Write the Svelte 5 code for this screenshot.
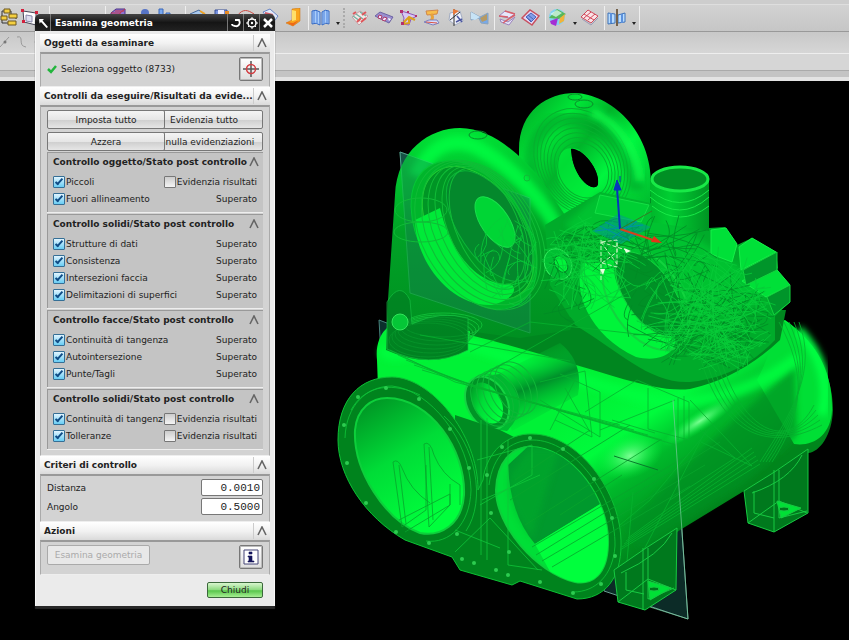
<script lang="ts">
	type Check = { label: string; checked: boolean; mark?: boolean };

	const groups: { title: string; rows: Check[] }[] = [
		{
			title: 'Controllo oggetto/Stato post controllo',
			rows: [
				{ label: 'Piccoli', checked: true, mark: true },
				{ label: 'Fuori allineamento', checked: true }
			]
		},
		{
			title: 'Controllo solidi/Stato post controllo',
			rows: [
				{ label: 'Strutture di dati', checked: true },
				{ label: 'Consistenza', checked: true },
				{ label: 'Intersezioni faccia', checked: true },
				{ label: 'Delimitazioni di superfici', checked: true }
			]
		},
		{
			title: 'Controllo facce/Stato post controllo',
			rows: [
				{ label: 'Continuità di tangenza', checked: true },
				{ label: 'Autointersezione', checked: true },
				{ label: 'Punte/Tagli', checked: true }
			]
		},
		{
			title: 'Controllo solidi/Stato post controllo',
			rows: [
				{ label: 'Continuità di tangenz', checked: true, mark: true },
				{ label: 'Tolleranze', checked: true, mark: true }
			]
		}
	];

	const tools = [
		'tree', 'frame', 'sep', 'blank', 'blank', 'sep', 'cube', 'key', 'bars', 'sep',
		'doc', 'save', 'curve', 'page', 'boot', 'line', 'book', 'caret', 'grip',
		'rows', 'film', 'star', 'spool', 'cross', 'bow', 'line', 'fold', 'sheet',
		'line', 'globe', 'caret', 'grid', 'line', 'split', 'caret', 'line'
	];

	let distance = $state('0.0010');
	let angle = $state('0.5000');

	// seeded so the wireframe is the same on every load
	let seed = 41;
	function rnd() {
		seed = (seed * 16807) % 2147483647;
		return seed / 2147483647;
	}

	function tangle(cx: number, cy: number, rx: number, ry: number, count: number) {
		const place = (spread: number) => {
			const a = rnd() * Math.PI * 2;
			const r = Math.sqrt(rnd()) * spread;
			return [cx + Math.cos(a) * r * rx, cy + Math.sin(a) * r * ry];
		};
		let d = '';
		for (let i = 0; i < count; i++) {
			const [x1, y1] = place(1);
			const [x2, y2] = place(1);
			// bend the middle a little so the edges read as long shallow arcs
			const mx = (x1 + x2) / 2 + (rnd() - 0.5) * 30;
			const my = (y1 + y2) / 2 + (rnd() - 0.5) * 30;
			d += `M${x1.toFixed(1)},${y1.toFixed(1)} Q${mx.toFixed(1)},${my.toFixed(1)} ${x2.toFixed(1)},${y2.toFixed(1)}`;
		}
		return d;
	}

	const darkLines = [
		tangle(700, 320, 76, 56, 70),
		tangle(610, 245, 56, 30, 40),
		tangle(560, 290, 36, 36, 14),
		tangle(670, 255, 50, 42, 26)
	].join('');
	const lightLines = [
		tangle(705, 305, 72, 60, 100),
		tangle(590, 265, 56, 50, 60),
		tangle(510, 260, 34, 46, 30),
		tangle(725, 345, 50, 30, 36)
	].join('');

	const steps = (n: number) => Array.from({ length: n }, (_, i) => i);
	const bolts = [
		[358, 397], [386, 388], [419, 399], [450, 429], [469, 468], [344, 425], [347, 463],
		[366, 503], [396, 532], [429, 543], [457, 534], [502, 447], [487, 475], [530, 438],
		[563, 449], [594, 479], [612, 518], [615, 556], [601, 584], [573, 593], [540, 582],
		[509, 552], [491, 513], [462, 559], [474, 563], [496, 570], [508, 575]
	];
</script>

{#snippet toolIcon(name: string)}
	<svg viewBox="0 0 20 20" width="20" height="20" aria-hidden="true">
		{#if name === 'tree'}
			<path d="M2 3h9v4h5v4M2 3v12h6" fill="none" stroke="#333" />
			<path d="M4 1h6v4H4zM9 6h8v4H9zM1 8h6v4H1zM8 13h8v4H8z" fill="#f4cf3f" stroke="#6d5720" />
		{:else if name === 'frame'}
			<path d="M3 3l13 2v12l-12-3z" fill="#fff" stroke="#445" />
			<path d="M6 7l6 1v6l-6-1z" fill="#dde" stroke="#88a" />
			<path d="M1 1h3v3H1zM15 3h3v3h-3zM2 12h3v3H2zM15 15h3v3h-3z" fill="#d3203c" />
		{:else if name === 'cube'}
			<path d="M3 5l5-4h9v9l-5 4H3z" fill="#8f74d0" stroke="#4a2f86" />
			<path d="M3 5h9v9M12 5l5-4M7 3h9" fill="none" stroke="#c1344b" />
		{:else if name === 'key'}
			<path d="M3 14l7-8 4 4-7 7z" fill="#f2c02d" stroke="#a07010" />
			<circle cx="13" cy="5" r="4" fill="#5674c6" />
		{:else if name === 'bars'}
			<path d="M3 1h4v15H3zM10 5h4v11h-4z" fill="#78a7f0" stroke="#3967b8" />
		{:else if name === 'doc'}
			<path d="M2 6l9-4 6 5-8 8z" fill="#a9c9ee" stroke="#46699b" />
			<path d="M12 3l5 3" stroke="#f0a323" stroke-width="2" />
		{:else if name === 'save'}
			<path d="M3 2h12v13H3z" fill="#7893df" stroke="#344d97" />
			<path d="M6 2h6v5H6z" fill="#eef" /><path d="M13 3h4v6h-4z" fill="#e88a24" />
		{:else if name === 'curve'}
			<path d="M1 8C7 0 12 2 18 6" fill="none" stroke="#cc4840" />
		{:else if name === 'page'}
			<path d="M3 4l7-3 8 7-6 8z" fill="#e2eafa" stroke="#6683c6" />
			<path d="M5 5l8 2" stroke="#ce5b66" stroke-width="2" />
		{:else if name === 'boot'}
			<path d="M8 1l8-1v13l-7 5-7-3 6-3z" fill="#f9a51c" stroke="#c96a08" stroke-width=".5" />
			<path d="M8 2l4 1v9l-4 1z" fill="#ffe06a" /><path d="M2 14l7 1 6-3-6 6z" fill="#ed6818" />
		{:else if name === 'book'}
			<path d="M1 3q4-2 8 1v13q-4-3-8-1zM18 3q-4-2-7 1v13q4-3 7-1z" fill="#a9cdfa" stroke="#3468c2" />
			<path d="M3 3v12M6 3v13M13 3v13M16 3v12" stroke="#5b8de0" stroke-width="2" opacity=".6" />
		{:else if name === 'rows'}
			<path d="M2 9l8-6 8 5-9 9z" fill="#f6e8e8" stroke="#c3a0a6" />
			<path d="M3 8l7 5M6 6l7 5M10 4l6 4" stroke="#74b3a2" stroke-width="1.500" />
			<path d="M3 6l3-2M7 14l4-4M12 7l4-3M11 14l5-4" stroke="#e0555a" stroke-width="2" />
		{:else if name === 'film'}
			<path d="M1 8l5-4 13 5-4 6z" fill="#9a8fd0" stroke="#6d63a4" />
			<path d="M5 7l3 1-1 3-3-1zM10 9l3 1-2 3-3-1z" fill="#f4e5ff" stroke="#af3c68" />
			<path d="M14 10l3 1-2 2z" fill="#fff" />
		{:else if name === 'star'}
			<path d="M3 3l7 2 9 3-6 3-2 6-6-1 1-6z" fill="#d7c7f4" stroke="#8f58b8" />
			<path d="M4 16l7-7 6 3M11 9v6l-6 1" fill="none" stroke="#dba21c" stroke-width="2" />
			<path d="M2 2h3v3H2zM17 7h2v2h-2zM3 14h3v3H3zM9 3h2v2H9z" fill="#b42e70" />
		{:else if name === 'spool'}
			<path d="M4 3l12-1-1 4-10 1z" fill="#f7bd4b" stroke="#d1864a" />
			<path d="M9 6q3 3 0 7" fill="none" stroke="#e7a23b" stroke-width="3" />
			<path d="M2 14l5-2h8l2 3-6 2z" fill="#d8ddfb" stroke="#7c80bd" />
			<path d="M4 14l11 1" stroke="#dc5443" />
		{:else if name === 'cross'}
			<path d="M4 5l10-2 3 10-8 4-6-5z" fill="#eff1fa" stroke="#a3adc2" />
			<path d="M8 1v17M4 12l10-8" stroke="#333" /><path d="M7 1l6 2-6 4z" fill="#e8793a" />
			<path d="M11 8l5 6M10 14l6-3" stroke="#4c569f" stroke-width="1.500" />
		{:else if name === 'bow'}
			<path d="M1 4l9 5 8-4v11l-7-1-2-5-8 2z" fill="#77a9e9" stroke="#8aa3bd" />
			<path d="M1 4l9 5-5 3-4-1z" fill="#c7e3f6" /><path d="M10 10l7-4v6l-5 2z" fill="#b69a64" />
		{:else if name === 'fold'}
			<path d="M2 8l6-5 10 3-6 4zM3 11l8 3 7-5-6 8-8-3z" fill="#e6e6fa" stroke="#9c83bd" />
			<path d="M2 8l9 1M6 15q5-4 12-8M8 3l10 3" fill="none" stroke="#d8606b" stroke-width="1.500" />
		{:else if name === 'sheet'}
			<path d="M1 10l8-8 9 6-7 9z" fill="#e3d9f6" stroke="#c8505f" stroke-width="1.500" />
			<path d="M5 9l5-4 5 4-5 5zM7 7l5 4M5 9l5 4" fill="#829ee8" stroke="#4a63b9" />
		{:else if name === 'globe'}
			<circle cx="9" cy="9" r="8" fill="#83d2f2" /><path d="M9 1l9 5-7 5-10-1z" fill="#56b75b" />
			<path d="M2 13l8-3-2 8-5-2z" fill="#a42fd4" /><path d="M12 10l5-4-1 7-5 3z" fill="#f1b33a" />
			<path d="M2 6l7-4 5 3-6 4z" fill="#e5fff8" opacity=".7" />
		{:else if name === 'grid'}
			<path d="M1 9l7-7 10 6-7 7z" fill="#f9e3e6" stroke="#cf4a5b" />
			<path d="M4 6l10 6M8 12l7-6M4 10l7-6" stroke="#d3485a" />
			<path d="M2 11l9 6 7-7" fill="none" stroke="#999bb8" />
		{:else if name === 'split'}
			<path d="M1 5l7 1v9l-7 1zM11 7l7-2v9l-7 1z" fill="#b9ddff" stroke="#3d73b9" />
			<path d="M4 5v10M15 6v9" stroke="#5c91dc" stroke-width="2" />
			<path d="M10 1v17" stroke="#74614a" stroke-width="2" />
		{/if}
	</svg>
{/snippet}

{#snippet chevron()}
	<svg viewBox="0 0 10 10" width="10" height="10" aria-hidden="true">
		<path d="M1 9L5 1l4 8" fill="none" stroke="#666" stroke-width="1.600" />
	</svg>
{/snippet}

{#snippet sectionHead(title: string)}
	<header class="section-head">
		<h2>{title}</h2>
		<button type="button" class="fold" aria-label="Comprimi {title}">{@render chevron()}</button>
	</header>
{/snippet}

<main>
	<div class="strip"></div>
	<nav class="toolbar" aria-label="Strumenti">
		{#each tools as tool}
			{#if tool === 'sep' || tool === 'line' || tool === 'grip' || tool === 'blank'}
				<span class={tool}></span>
			{:else if tool === 'caret'}
				<button class="caret" aria-label="Altro"></button>
			{:else}
				<button class="tool" class:first={tool === 'tree'} aria-label={tool}>{@render toolIcon(tool)}</button>
			{/if}
		{/each}
	</nav>
	<div class="curves">
		<svg viewBox="0 0 60 20" width="60" height="20" aria-hidden="true">
			<path d="M0 15L9 5M17 5c8-2 0 9 9 10M40 5q-10 5 0 10" fill="none" stroke="#999" />
			<circle cx="5" cy="10" r="1.500" fill="#777" />
		</svg>
	</div>
	<div class="prompt"></div>
	<div class="edge"></div>

	<section class="viewport" aria-label="Vista grafica">
		<svg viewBox="0 81 849 559" preserveAspectRatio="xMinYMin meet">
			<defs>
				<linearGradient id="body" gradientUnits="userSpaceOnUse" x1="610" y1="385" x2="700" y2="515">
					<stop offset="0" stop-color="#00f236" />
					<stop offset=".3" stop-color="#00fb3c" />
					<stop offset=".55" stop-color="#00b82a" />
					<stop offset="1" stop-color="#00851c" />
				</linearGradient>
				<linearGradient id="tower" x1="0" y1="0" x2="0" y2="1">
					<stop offset="0" stop-color="#00e236" />
					<stop offset=".45" stop-color="#00a226" />
					<stop offset="1" stop-color="#008c20" />
				</linearGradient>
				<linearGradient id="torus" x1="0" y1="0" x2="1" y2="1">
					<stop offset="0" stop-color="#009a22" />
					<stop offset=".25" stop-color="#00e637" />
					<stop offset=".4" stop-color="#00b42a" />
					<stop offset=".58" stop-color="#00f53e" />
					<stop offset="1" stop-color="#009c26" />
				</linearGradient>
				<linearGradient id="bore" x1="0" y1="0" x2=".5" y2="1">
					<stop offset="0" stop-color="#008b22" />
					<stop offset=".5" stop-color="#00dc37" />
					<stop offset="1" stop-color="#00ff3c" />
				</linearGradient>
				<linearGradient id="pipe">
					<stop offset="0" stop-color="#00b62a" />
					<stop offset=".35" stop-color="#00cf32" />
					<stop offset="1" stop-color="#009423" />
				</linearGradient>
				<linearGradient id="port" gradientUnits="userSpaceOnUse" x1="525" y1="350" x2="555" y2="425">
					<stop offset="0" stop-color="#00e636" stop-opacity="0" />
					<stop offset=".45" stop-color="#00902a" />
					<stop offset="1" stop-color="#00e636" stop-opacity="0" />
				</linearGradient>
				<radialGradient id="shine">
					<stop offset="0" stop-color="#7bff93" />
					<stop offset="1" stop-color="#00ff3c" stop-opacity="0" />
				</radialGradient>
				<filter id="soften" x="-10%" y="-10%" width="120%" height="120%">
					<feGaussianBlur stdDeviation="3" />
				</filter>
				<clipPath id="rightBore">
					<path d="M530 447C572 447 610 500 608 545C607 575 592 585 575 582C535 572 496 525 496 490C497 462 512 447 530 447Z" />
				</clipPath>
			</defs>

			<!-- datum planes -->
			<path d="M400 152L530 198V333L410 293Z" fill="#143f3b" stroke="#5a9c94" />
			<path d="M379 320L400 328V380L382 372Z" fill="#0c302d" stroke="#46827c" />
			<path d="M604 591L688 619L673 400L600 380Z" fill="#0c2b27" stroke="#679d91" />

			<!-- rear torus -->
			<path fill-rule="evenodd" fill="url(#torus)" d="M519 190V150C519 110 548 93 575 93C610 94 652 130 651 185L650 215L560 250ZM571 149C580 147 600 168 598 184C596 192 582 185 575 168C572 160 571 152 571 149Z" />
			<path d="M530 175C530 125 560 112 590 125C617 138 634 165 636 190" fill="none" stroke="#009825" stroke-width="14" opacity=".5" filter="url(#soften)" />
			<path d="M560 185C550 155 565 143 580 150L572 160Q582 190 598 190L602 200Q575 210 560 185" fill="#00ec39" opacity=".7" />
			<g fill="none" stroke="#06b02e">
				{#each steps(8) as i}
					<ellipse cx={584 - i / 2} cy={162 + i} rx={45 - i * 3} ry={57 - i * 4} transform="rotate(-32 584 165)" />
				{/each}
				<ellipse cx="575" cy="97" rx="7" ry="3" stroke="#0a8c2a" /><ellipse cx="584" cy="104" rx="9" ry="4" stroke="#0a8c2a" />
			</g>
			<path d="M571 149C580 147 600 168 598 184C596 192 582 185 575 168C572 160 571 152 571 149Z" />
			<path d="M592 112C619 124 637 151 640 181" fill="none" stroke="#10ff4c" stroke-width="9" opacity=".8" filter="url(#soften)" />

			<!-- main casting -->
			<path fill="url(#body)" d="M377 360C374 330 395 318 410 322L470 328L680 360L785 320C815 340 833 375 833 410C832 435 820 452 808 453L744 491L680 530L600 585L480 530L378 388Z" />
			<path d="M757 380C772 352 775 330 779 318C815 338 833 370 832 410C831 436 812 447 794 444Z" fill="#00df35" />
			<path d="M798 330C822 355 830 385 822 415" fill="none" stroke="#00ff42" stroke-width="10" filter="url(#soften)" />
			<path d="M470 322L590 312L700 310L786 310L780 340Q740 378 690 389C650 394 590 365 470 335Z" fill="#00861f" />
			<path d="M700 452L795 365L797 435L744 485L640 550L625 525Z" fill="#009021" opacity=".7" filter="url(#soften)" />
			<path d="M385 352Q395 358 410 352L470 345Q580 382 670 404Q745 398 795 360" fill="none" stroke="#00ff3f" stroke-width="12" stroke-linecap="round" opacity=".8" filter="url(#soften)" />
			<ellipse cx="630" cy="456" rx="34" ry="22" fill="url(#shine)" transform="rotate(-20 630 456)" />
			<ellipse cx="700" cy="421" rx="44" ry="10" fill="url(#shine)" transform="rotate(-33 700 421)" />

			<!-- front left tower -->
			<path d="M386 350L388 300L395 195C397 150 430 128 460 128C490 128 518 152 540 178L565 215L600 270L570 330L520 338L468 331V350Q430 370 386 350Z" fill="url(#tower)" />
			<path d="M416 176C432 143 456 136 478 148C509 165 545 200 562 238" fill="none" stroke="#00ff42" stroke-width="15" opacity=".8" filter="url(#soften)" />
			<path d="M400 152L530 198V333L410 293Z" fill="#1a765d" opacity=".35" stroke="#45b987" />
			<ellipse cx="474" cy="235" rx="52" ry="82" fill="#00b52b" stroke="#05c735" transform="rotate(-34 474 235)" />
			<ellipse cx="478" cy="233" rx="45" ry="74" fill="#009525" stroke="#2c3" transform="rotate(-34 478 233)" />
			<path d="M415 220C415 260 450 307 492 305C520 298 518 282 505 284C475 283 450 250 440 208Z" fill="#00ea38" />
			<ellipse cx="490" cy="226" rx="31" ry="63" fill="#04882c" stroke="#0cb438" transform="rotate(-34 490 226)" />
			<ellipse cx="495" cy="222" rx="14" ry="29" fill="#00d535" stroke="#19e04b" transform="rotate(-34 495 222)" />
			<g fill="none" stroke="#10bc37">
				{#each steps(6) as i}
					<ellipse cx={480 + i * 2} cy={235 - i} rx={56 - i * 5} ry={82 - i * 4} transform="rotate({-34 + i * 2} 480 235)" />
					<ellipse cx={428 + i * 3} cy={340 - i * 3} rx="39" ry={17 - i} />
				{/each}
				<ellipse cx="421" cy="210" rx="26" ry="12" /><ellipse cx="421" cy="232" rx="27" ry="10" />
				<ellipse cx="478" cy="135" rx="9" ry="4" stroke="#098c2b" /><circle cx="527" cy="178" r="3" />
			</g>
			<path d="M387 302Q400 280 410 300L412 324Q440 310 468 318V350Q430 370 387 349Z" fill="#007d22" opacity=".65" stroke="#17bd42" />
			<circle cx="400" cy="322" r="8" fill="#05c637" stroke="#32e65b" />

			<!-- upper machinery -->
			<path d="M545 225L600 192L650 203L709 228L725 227L737 245L752 238L776 252L778 268L770 278L790 285V302L775 316L775 340Q740 377 690 382C650 384 620 352 575 325L550 285Z" fill="#00ab2a" />
			<path d="M565 225L600 192L650 205L700 240L770 290L740 315L690 320L600 250Z" fill="#00c832" opacity=".8" filter="url(#soften)" />
			<path d="M650 180L651 222L709 231V180Z" fill="url(#pipe)" />
			<ellipse cx="680" cy="179" rx="28" ry="12" fill="#008f24" stroke="#18e947" stroke-width="3" />
			<path d="M650 190Q680 215 709 190M650 197Q680 223 709 197M652 206Q680 228 709 206" fill="none" stroke="#18e947" />
			<path d="M711 230l15-2 11 16-5 18-21-8zM739 247l13-9 24 14-35 18zM742 281l30-17 18 21-24 12z" fill="#00e038" stroke="#14f048" />
			<path d="M600 195l49 10-8 17-46-9z" fill="#00cf34" stroke="#14e045" />
			<path d="M767 297l23-12v17l-16 13zM743 270l34-18v18l-31 15z" fill="#00952a" stroke="#12d43d" />
			<path d="M584 260C570 290 590 336 636 357C665 364 683 348 672 329C640 328 610 290 614 260Z" fill="#00f43a" />
			<ellipse cx="646" cy="298" rx="35" ry="58" fill="none" stroke="#12d33e" stroke-width="2" transform="rotate(-34 646 298)" />
			<ellipse cx="649" cy="294" rx="24" ry="48" fill="#009026" stroke="#12d33e" transform="rotate(-34 649 294)" />
			<ellipse cx="558" cy="264" rx="13" ry="16" fill="#00bf32" stroke="#35ee60" transform="rotate(-30 558 264)" />
			<ellipse cx="561" cy="264" rx="6" ry="9" fill="#00f43a" stroke="#078229" transform="rotate(-30 561 264)" />
			<g fill="none">
				<path d={darkLines} stroke="#008a24" stroke-width=".8" />
				<path d={lightLines} stroke="#08cc38" stroke-width=".8" />
			</g>

			<!-- small port -->
			<path d="M490 378L560 343Q584 362 578 395L512 431Z" fill="url(#port)" />
			<path d="M476 377L500 374Q535 402 507 431L482 427Z" fill="#00b930" />
			<ellipse cx="487" cy="403" rx="20" ry="28" fill="#009426" stroke="#14d342" stroke-width="2" transform="rotate(-28 487 403)" />
			<ellipse cx="487" cy="403" rx="14" ry="22" fill="url(#bore)" transform="rotate(-28 487 403)" />
			<g fill="none" stroke="#0eb838">
				{#each steps(5) as i}
					<ellipse cx={492 + i * 6} cy={400 - i * 3} rx="19" ry="28" transform="rotate(-28 {492 + i * 6} {400 - i * 3})" />
				{/each}
			</g>

			<!-- front flanges -->
			<path d="M455 415L500 430L520 440L500 575L455 556Z" fill="#008c22" />
			<path d="M338 440C338 399 360 377 392 377C430 377 478 433 478 490L483 480C486 452 508 433 532 434C578 434 622 492 621 545C621 578 605 599 577 599L520 581L512 585L460 570L452 557L405 540C365 517 338 476 338 440Z" fill="#00831d" stroke="#0dc035" />
			<path d="M387 398C430 398 466 450 464 495C462 525 440 537 420 533C385 520 353 470 355 430C357 408 372 398 387 398Z" fill="url(#bore)" stroke="#0dcf3b" stroke-width="2" />
			<path d="M530 447C572 447 610 500 608 545C607 575 592 585 575 582C535 572 496 525 496 490C497 462 512 447 530 447Z" fill="#00de37" stroke="#0dcf3b" stroke-width="2" />
			<g clip-path="url(#rightBore)">
				<path d="M508 465L535 440L615 470V495L535 544Q510 515 508 465Z" fill="#00992d" />
				<path d="M535 544L615 495V590H560Z" fill="#00ff3d" />
				<path d="M530 447h30l-28 92q-28-36-22-65z" fill="#00ad2b" opacity=".5" filter="url(#soften)" />
			</g>
			<g fill="none" stroke="#0fc63a" opacity=".8">
				<path d="M345 438C346 405 367 386 392 386C430 390 470 440 471 490C470 525 449 544 426 541M489 485C493 455 510 440 533 440C573 440 616 495 615 546C613 575 596 592 573 592M351 410C366 383 395 383 420 395M444 416C475 443 487 500 466 531M481 420V555M487 418V560M477 460L532 445V475L480 505M482 500L540 475M455 552L490 518L538 570M455 530L500 548M508 440L508 565L542 570" />
			</g>
			<g fill="none" stroke="#07a52c" stroke-width=".8">
				<path d="M393 462L402 527L426 510V465M393 462Q398 458 402 468Q410 490 430 503M399 465L406 524M424 444L429 527L450 505V484M424 444Q430 440 434 455Q442 475 460 485V505M429 447L433 520M399 520L450 494V505L405 532M532 547L690 454M536 555L720 442M542 561L705 465M552 567L690 486M525 525L660 440M510 500L630 425M560 515L622 475M515 480L590 430" />
			</g>
			{#each bolts as [x, y]}
				<circle cx={x} cy={y} r="2" fill="#2ccc50" />
			{/each}

			<!-- feature edges on the casting -->
			<g fill="none" stroke="#06b32f" stroke-width=".8">
				{#each steps(5) as i}
					<path d="M{700 + i * 5} 356C{720 + i * 5} 430 {764 + i * 6} 455 {822 - i * 2} {425 - i * 5}" />
					<path d="M{779 + i * 5} 322C{805 + i * 3} 370 {806 - i * 3} 410 {772 - i * 3} 462" />
					<path d="M{390 + i * 8} {350 + i * 5}L{455 + i * 12} {382 + i * 3}L{620 + i * 14} {425 + i * 5}" />
					<path d="M{620 + i * 2} {550 - i * 3}L{760 - i * 2} {464 - i * 4}" />
				{/each}
				<path d="M585 412L637 380L689 402V440L648 429V388M600 430L675 400M612 420L655 433M540 382L585 371L592 437L555 420M560 374L600 392V437L540 400M565 388L590 432M575 380L550 430M678 398V440M684 396V444M690 400L752 466L701 442M700 430L735 458L670 500M620 525L650 500L710 428M626 573L633 492M636 565L706 430M470 352L530 322L690 340M420 335L570 361M480 377L650 280" />
			</g>
			<path d="M614 456L658 470" stroke="#087a2b" />

			<!-- feet -->
			<g stroke="#17ca42" stroke-linejoin="round">
				<path d="M744 491L776 471L808 449V513L774 532L748 523Z" fill="#00791d" />
				<path d="M774 470V532M779 470V518L807 511M754 491V513L774 518M748 523L779 501L807 513M752 493Q790 480 802 455" fill="none" />
				<path d="M777 501L801 508L781 518Z" fill="#00e036" /><ellipse cx="784" cy="509" rx="5" ry="2" fill="#00761c" />
				<path d="M614 570L646 548L677 528L676 590L645 610L618 602Z" fill="#00791d" />
				<path d="M643 548V610M648 548V599L674 588M626 572V590L644 594M618 602L648 579L676 590M621 573Q660 555 672 533" fill="none" />
				<path d="M648 581L671 588L650 600Z" fill="#00e036" /><ellipse cx="654" cy="589" rx="5" ry="2" fill="#00761c" />
			</g>
			<path d="M673 400L688 619M650 607L688 619" stroke="#7acb9d" opacity=".7" />

			<!-- work coordinate system -->
			<path d="M592 231l26-17 33 13-30 17z" fill="#009b90" opacity=".55" />
			<path d="M595 231l48-6M605 222l30 14M612 238l25-17M600 226l30 15" stroke="#008eab" />
			<path d="M620 229L617 188" stroke="#0634bc" stroke-width="2" />
			<path d="M617 180l4 10h-7zM620 176v6" fill="#0634bc" stroke="#0634bc" />
			<path d="M620 229l36 12" stroke="#d6431c" stroke-width="2" /><path d="M662 243l-11-1 3-6z" fill="#e33418" />
			<path d="M620 229l32-18" stroke="#337b25" />
			<path d="M601 240v41M601 242l16 22M601 242l28 9M602 263l15-11V240l-16 2M602 263l15 4V240" fill="none" stroke="#c3f4bd" stroke-dasharray="4 2" />
			<path d="M600 269h5l-2 6zM624 248l7 3-5 2z" fill="#e9ffe2" />
		</svg>
	</section>

	<form class="dialog" aria-label="Esamina geometria" onsubmit={(e) => e.preventDefault()}>
		<div class="titlebar">
			<button type="button" aria-label="Comprimi">
				<svg viewBox="0 0 12 12" width="12" height="12"><path d="M2 2h5L5.500 3.500 11 10 9.500 11 4 5 2.500 6.500z" fill="#fff" /></svg>
			</button>
			<h1>Esamina geometria</h1>
			<button type="button" aria-label="Reimposta">
				<svg viewBox="0 0 12 12" width="12" height="12"><path d="M5 3h4c2 4-1 7-4 6-2 0-3-1-3-2" fill="none" stroke="#fff" stroke-width="1.800" /></svg>
			</button>
			<button type="button" aria-label="Impostazioni">
				<svg viewBox="0 0 12 12" width="12" height="12">
					<circle cx="6" cy="6" r="4" fill="none" stroke="#fff" stroke-width="1.500" />
					<circle cx="6" cy="6" r="1.200" fill="#fff" />
					<path d="M6 0v2M6 10v2M0 6h2M10 6h2M2 2l1 1M9 9l1 1M2 10l1-1M9 3l1-1" stroke="#fff" />
				</svg>
			</button>
			<button type="button" aria-label="Chiudi finestra">
				<svg viewBox="0 0 12 12" width="12" height="12"><path d="M2 2l8 8M10 2l-8 8" stroke="#fff" stroke-width="2.500" /></svg>
			</button>
		</div>

		<div class="sheet">
			{@render sectionHead('Oggetti da esaminare')}
			<div class="section-body pick">
				<svg viewBox="0 0 10 10" width="10" height="10" aria-hidden="true">
					<path d="M1 5l3 3 5-6" fill="none" stroke="#22b53c" stroke-width="2.500" />
				</svg>
				<span class="grow">Seleziona oggetto (8733)</span>
				<button type="button" class="square" aria-label="Seleziona oggetto">
					<svg viewBox="0 0 18 18" width="18" height="18">
						<path d="M9 1v16M1 9h16" stroke="#555" stroke-width="1.500" />
						<circle cx="9" cy="9" r="4.500" fill="none" stroke="#d33e43" stroke-width="1.500" />
					</svg>
				</button>
			</div>

			{@render sectionHead('Controlli da eseguire/Risultati da evide...')}
			<div class="section-body checks">
				<div class="commands">
					<button type="button" class="push over">Imposta tutto</button>
					<button type="button" class="push under">Evidenzia tutto</button>
					<button type="button" class="push over">Azzera</button>
					<button type="button" class="push under">Annulla evidenziazioni</button>
				</div>
				<div class="groups">
					{#each groups as group}
						<fieldset>
							<div class="group-head">
								<h3>{group.title}</h3>
								<button type="button" class="fold" aria-label="Comprimi">{@render chevron()}</button>
							</div>
							{#each group.rows as row}
								<div class="check-row">
									<label class="check"><input type="checkbox" bind:checked={row.checked} /><span>{row.label}</span></label>
									{#if row.mark}
										<label class="check"><input type="checkbox" /><span>Evidenzia risultati</span></label>
									{:else}
										<span class="result">Superato</span>
									{/if}
								</div>
							{/each}
						</fieldset>
					{/each}
				</div>
			</div>

			{@render sectionHead('Criteri di controllo')}
			<div class="section-body criteria">
				<div class="field"><label for="distance">Distanza</label><input id="distance" type="text" bind:value={distance} /></div>
				<div class="field"><label for="angle">Angolo</label><input id="angle" type="text" bind:value={angle} /></div>
			</div>

			{@render sectionHead('Azioni')}
			<div class="section-body actions">
				<button type="button" class="push examine" disabled>Esamina geometria</button>
				<button type="button" class="square" aria-label="Informazioni">
					<svg viewBox="0 0 18 18" width="18" height="18">
						<path d="M2 2h14v14H2z" fill="#fff" stroke="#447" />
						<path d="M7 4h3v2H7zM6 8h4v5h2v1H6v-1h1V9H6z" fill="#14145c" stroke="#14145c" stroke-width=".6" />
					</svg>
				</button>
			</div>
			<footer><button type="button" class="close">Chiudi</button></footer>
		</div>
	</form>
</main>

<style>
	:global(body) {
		margin: 0;
		background: #000;
	}

	main {
		position: relative;
		display: flex;
		flex-direction: column;
		min-height: 100vh;
		overflow: hidden;
		color: #222;
		font: 9px/12px 'DejaVu Sans', sans-serif;
	}

	button, input { font: inherit; color: inherit; }
	button { padding: 0; border: 0; background: none; }
	h1, h2, h3 { margin: 0; font-size: 9px; line-height: 12px; white-space: nowrap; }
	svg { display: block; flex: none; }

	.strip {
		height: 4px;
		background: #cdcdcd;
		border-bottom: 1px solid #dedede;
	}

	.toolbar {
		display: flex;
		align-items: center;
		height: 26px;
		background: linear-gradient(#d2d2d2, #c6c6c6);
		border-bottom: 1px solid #999;
	}

	.toolbar > * { flex: none; }
	.tool { width: 24px; display: grid; place-items: center; }
	.tool.first { width: 18px; }
	.blank { width: 24px; }
	.sep { width: 8px; }
	.line { width: 3px; }

	.sep, .line {
		height: 24px;
		box-sizing: border-box;
		border-right: 1px solid #eee;
	}

	.grip {
		width: 3px;
		height: 20px;
		margin: 0 2px;
		border-left: 2px dotted #aaa;
		box-sizing: border-box;
	}

	.caret {
		width: 8px;
		height: 6px;
		margin-top: 12px;
	}

	.caret::before {
		content: '';
		display: block;
		margin-left: 3px;
		border: 2px solid transparent;
		border-top: 3px solid #222;
		width: 0;
	}

	.curves {
		height: 21px;
		background: linear-gradient(#c8c8c8, #d6d6d6);
		border-bottom: 1px solid #eee;
	}

	.prompt {
		height: 16px;
		background: #d6d6d6;
	}

	.edge {
		height: 6px;
		background: #c4c4c4;
		border-top: 1px solid #aaa;
		border-bottom: 4px solid #e3e3e3;
	}

	.viewport {
		flex: 1;
		background: #000;
	}

	.viewport svg { width: 100%; }

	.dialog {
		position: absolute;
		top: 14px;
		left: 35px;
		width: 240px;
		border-radius: 5px 5px 0 0;
		overflow: hidden;
		box-shadow: 0 3px 1px #292929;
	}

	.titlebar {
		display: flex;
		align-items: center;
		height: 17px;
		color: #fff;
		background: linear-gradient(#444, #151515 50%, #222);
	}

	.titlebar h1 { flex: 1; padding-left: 4px; }

	.titlebar button {
		display: grid;
		place-items: center;
		width: 16px;
		height: 17px;
		border-left: 1px solid #777;
		box-sizing: border-box;
	}

	.titlebar button:first-child {
		border-left: 0;
		border-right: 1px solid #777;
	}

	.sheet {
		padding: 3px 4px 8px;
		background: #ebebeb;
		border: solid #f8f8f8;
		border-width: 0 1px;
		box-sizing: border-box;
	}

	.section-head {
		display: flex;
		align-items: center;
		height: 18px;
		background: linear-gradient(#fff, #f2f2f2 50%, #dadada);
	}

	.section-head h2 {
		flex: 1;
		padding-left: 4px;
	}

	.fold {
		display: grid;
		place-items: center;
		width: 17px;
		height: 16px;
	}

	.section-head .fold { flex: none; border-left: 1px solid #ccc; }

	.section-body {
		padding: 3px 6px;
		background: #d3d3d3;
		border: 1px solid #aaa;
		border-top: 2px solid #999;
		border-bottom-color: #eee;
		box-sizing: border-box;
	}

	.grow { flex: 1; }

	.pick {
		display: flex;
		align-items: center;
		gap: 4px;
		height: 35px;
		padding-bottom: 6px;
	}

	.square {
		display: grid;
		place-items: center;
		width: 24px;
		height: 24px;
		background: linear-gradient(#fff, #ddd);
		border: 1px solid #777;
		border-radius: 2px;
		box-shadow: inset 0 0 0 1px #bbb;
		box-sizing: border-box;
	}

	.checks { padding-bottom: 6px; }

	.commands {
		display: grid;
		grid-template-columns: 118px 1fr;
		row-gap: 3px;
		margin-bottom: 1px;
	}

	.push {
		height: 19px;
		background: linear-gradient(#f4f4f4, #e6e6e6 50%, #d0d0d0 55%, #e6e6e6);
		border: 1px solid #777;
		border-radius: 2px;
		white-space: nowrap;
		box-sizing: border-box;
	}

	.over { position: relative; z-index: 1; }
	.under { margin-left: -20px; }

	.groups {
		display: flex;
		flex-direction: column;
		gap: 2px;
	}

	fieldset {
		min-width: 0;
		margin: 0;
		padding: 0 6px 5px;
		background: #c4c4c4;
		border: 0;
		box-shadow: inset 1px 1px #999, 0 1px #eee;
	}

	.group-head {
		display: flex;
		align-items: center;
		height: 21px;
		padding-bottom: 2px;
		box-sizing: border-box;
	}

	.group-head h3 { flex: 1; width: 0; }
	.group-head .fold { width: 10px; margin-right: -2px; }

	.check-row {
		display: flex;
		align-items: center;
		justify-content: space-between;
		height: 17px;
	}

	.check {
		display: flex;
		align-items: center;
		gap: 1px;
		white-space: nowrap;
	}

	.check input {
		appearance: none;
		flex: none;
		width: 12px;
		height: 12px;
		margin: 0;
		border: 1px solid #777;
		border-radius: 1px;
		background: linear-gradient(#ccc, #f4f4f4);
	}

	.check input:checked {
		display: grid;
		place-items: center;
		border-color: #356f96;
		background: linear-gradient(#e2f5ff, #68cdf4);
	}

	.check input:checked::before {
		content: '';
		width: 8px;
		height: 4px;
		margin-top: -2px;
		border: solid #104c86;
		border-width: 0 0 2px 2px;
		transform: rotate(-48deg);
		box-sizing: border-box;
	}

	.criteria {
		display: flex;
		flex-direction: column;
		gap: 2px;
		height: 48px;
	}

	.field {
		display: flex;
		align-items: center;
		justify-content: space-between;
	}

	.field input {
		width: 62px;
		height: 17px;
		padding: 0 2px;
		border: 1px solid #777;
		border-radius: 2px;
		background: #fff;
		font: 11px/15px 'Liberation Mono', monospace;
		text-align: right;
		box-sizing: border-box;
	}

	.actions {
		display: flex;
		align-items: flex-start;
		justify-content: space-between;
		height: 35px;
	}

	.examine {
		width: 103px;
		height: 20px;
		color: #aaa;
		border-color: #aaa;
		background: #e8e8e8;
	}

	footer {
		display: flex;
		justify-content: flex-end;
		padding: 7px 7px 0;
	}

	.close {
		width: 56px;
		height: 16px;
		border: 1px solid #3b683b;
		border-radius: 2px;
		background: linear-gradient(#d9f6cf, #8bd97d 50%, #58c64b 55%, #a7ef93);
	}
</style>
